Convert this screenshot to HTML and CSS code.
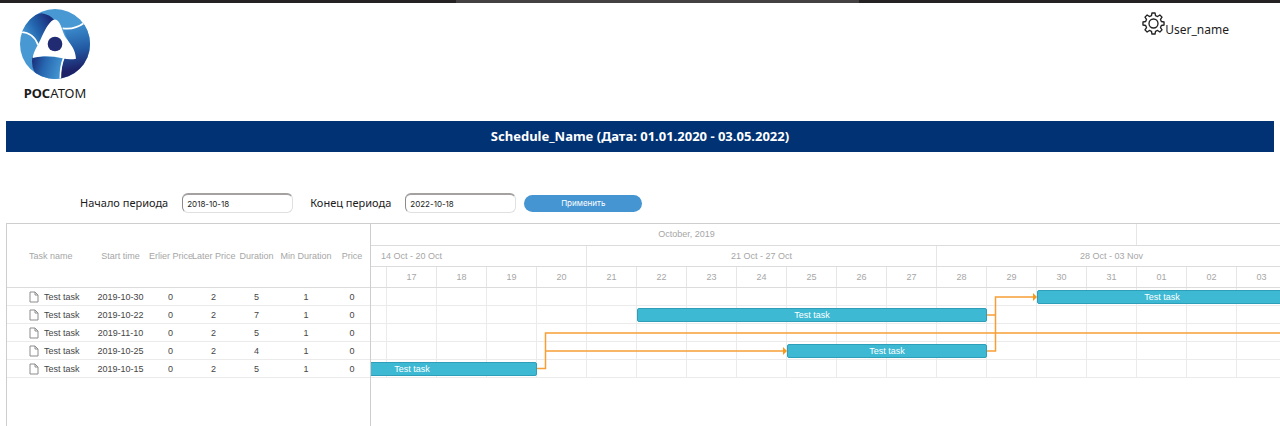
FILE: index.html
```
<!DOCTYPE html>
<html lang="ru">
<head>
<meta charset="utf-8">
<meta name="viewport" content="width=device-width, initial-scale=1">
<title>Schedule_Name</title>
<link rel="stylesheet" href="styles.css">
</head>
<body>
<div class="strip"><div class="strip-tab"></div></div>
<header class="header">
  <div class="logo">
    <svg class="logo-mark" viewBox="60 25 210 210" aria-hidden="true">
      <defs>
        <clipPath id="disc"><circle cx="165" cy="130" r="105"/></clipPath>
        <linearGradient id="g-top" x1="75" y1="100" x2="150" y2="60" gradientUnits="userSpaceOnUse"><stop offset="0" stop-color="#3f90cf"/><stop offset=".45" stop-color="#2264ad"/><stop offset="1" stop-color="#1c2f7c"/></linearGradient>
        <linearGradient id="g-right" x1="210" y1="80" x2="235" y2="205" gradientUnits="userSpaceOnUse"><stop offset="0" stop-color="#3b8ccc"/><stop offset=".55" stop-color="#2259a3"/><stop offset="1" stop-color="#1d2268"/></linearGradient>
        <linearGradient id="g-bottom" x1="98" y1="190" x2="180" y2="215" gradientUnits="userSpaceOnUse"><stop offset="0" stop-color="#1d3682"/><stop offset=".4" stop-color="#2767b0"/><stop offset="1" stop-color="#4294d1"/></linearGradient>
      </defs>
      <g clip-path="url(#disc)">
        <path fill="#4798d3" d="M60 25h210v210H60z"/>
        <path fill="url(#g-top)" d="M66 94Q90 40 125 38Q150 42 163 58L112 131Q100 98 66 94Z"/>
        <path fill="url(#g-right)" d="M190 85Q225 88 251 68L280 80V240H181Q182 200 193 172L224 172Z"/>
        <path fill="url(#g-bottom)" d="M97 170Q145 163 190 174Q180 205 181 240H130Q90 215 97 170Z"/>
        <path fill="none" stroke="#fff" stroke-width="5" d="M62 94Q102 96 114 133M188 83Q224 88 252 67M181 240Q180 198 192 170"/>
      </g>
      <path fill="#fff" d="M154 62Q165 50 176 63C187 79 187 94 198 112C210 129 226 144 228 174Q211 178 187 173C158 165 128 164 98 172C101 151 113 136 122 116C132 94 139 77 154 62Z"/>
      <circle cx="165" cy="130" r="22" fill="#202b72"/>
    </svg>
    <div class="logo-name"><b>РОС</b>АТОМ</div>
  </div>
  <div class="user">
    <svg class="gear" viewBox="-12 -12 24 24" aria-hidden="true" fill="none" stroke="#222" stroke-width="1.4" stroke-linejoin="round">
      <path d="M-2.1-8.2L-1.6-11H1.6L2.1-8.2L4.3-7.3L6.65-8.9L8.9-6.65L7.3-4.3L8.2-2.1L11-1.6V1.6L8.2 2.1L7.3 4.3L8.9 6.65L6.65 8.9L4.3 7.3L2.1 8.2L1.6 11H-1.6L-2.1 8.2L-4.3 7.3L-6.65 8.9L-8.9 6.65L-7.3 4.3L-8.2 2.1L-11 1.6V-1.6L-8.2-2.1L-7.3-4.3L-8.9-6.65L-6.65-8.9L-4.3-7.3Z"/>
      <circle r="4.7"/>
    </svg>
    <span>User_name</span>
  </div>
</header>
<main class="main">
  <h1 class="title">Schedule_Name (Дата: 01.01.2020 - 03.05.2022)</h1>
  <form class="filter">
    <label for="from">Начало периода</label>
    <input id="from" type="text" value="2018-10-18">
    <label for="to">Конец периода</label>
    <input id="to" type="text" value="2022-10-18">
    <button type="button">Применить</button>
  </form>
  <section class="gantt">
    <table class="tasks">
      <colgroup><col class="c-name"><col class="c-start"><col class="c-num"><col class="c-num"><col class="c-num"><col class="c-min"><col class="c-price"></colgroup>
      <thead><tr><th>Task name</th><th>Start time</th><th>Erlier Price</th><th>Later Price</th><th>Duration</th><th>Min Duration</th><th>Price</th></tr></thead>
      <tbody>
        <tr><td><svg class="file" viewBox="0 0 10 12"><path d="M1 1h5l3 3v7H1zM6 1v3h3"/></svg>Test task</td><td>2019-10-30</td><td>0</td><td>2</td><td>5</td><td>1</td><td>0</td></tr>
        <tr><td><svg class="file" viewBox="0 0 10 12"><path d="M1 1h5l3 3v7H1zM6 1v3h3"/></svg>Test task</td><td>2019-10-22</td><td>0</td><td>2</td><td>7</td><td>1</td><td>0</td></tr>
        <tr><td><svg class="file" viewBox="0 0 10 12"><path d="M1 1h5l3 3v7H1zM6 1v3h3"/></svg>Test task</td><td>2019-11-10</td><td>0</td><td>2</td><td>5</td><td>1</td><td>0</td></tr>
        <tr><td><svg class="file" viewBox="0 0 10 12"><path d="M1 1h5l3 3v7H1zM6 1v3h3"/></svg>Test task</td><td>2019-10-25</td><td>0</td><td>2</td><td>4</td><td>1</td><td>0</td></tr>
        <tr><td><svg class="file" viewBox="0 0 10 12"><path d="M1 1h5l3 3v7H1zM6 1v3h3"/></svg>Test task</td><td>2019-10-15</td><td>0</td><td>2</td><td>5</td><td>1</td><td>0</td></tr>
      </tbody>
    </table>
    <div class="timeline">
      <div class="track">
        <div class="scale months"><span>October, 2019</span><span></span></div>
        <div class="scale weeks"><span>14 Oct - 20 Oct</span><span>21 Oct - 27 Oct</span><span>28 Oct - 03 Nov</span></div>
        <div class="scale days"><span></span><span></span><span></span><span>17</span><span>18</span><span>19</span><span>20</span><span>21</span><span>22</span><span>23</span><span>24</span><span>25</span><span>26</span><span>27</span><span>28</span><span>29</span><span>30</span><span>31</span><span>01</span><span>02</span><span>03</span></div>
        <div class="chart">
          <div class="row"><div class="bar" style="grid-column: 17 / span 5">Test task</div></div>
          <div class="row"><div class="bar" style="grid-column: 9 / span 7">Test task</div></div>
          <div class="row"></div>
          <div class="row"><div class="bar" style="grid-column: 12 / span 4">Test task</div></div>
          <div class="row"><div class="bar" style="grid-column: 2 / span 5">Test task</div></div>
          <svg class="links" viewBox="0 0 1050 90" aria-hidden="true">
            <g fill="none" stroke="#f79f35" stroke-width="1.5">
              <path d="M300 80.500h8.500V45H1050M308.500 63H546M750 27h8.500M750 63h8.500V9H796"/>
            </g>
            <path fill="#f79a1c" d="M546 59l4 4-4 4zM796 5l4 4-4 4z"/>
          </svg>
        </div>
      </div>
    </div>
  </section>
</main>
</body>
</html>
```
FILE: styles.css
```
* { box-sizing: border-box; }

body {
  margin: 0;
  min-height: 100vh;
  display: flex;
  flex-direction: column;
  background: #fff;
  color: #1c1c1c;
  font: 12px/16px "Noto Sans", sans-serif;
}

.strip { height: 3px; background: #242223; }
.strip-tab { width: 31.5%; height: 3px; margin-left: 35.6%; background: #434142; }

.header {
  display: flex;
  justify-content: space-between;
  align-items: flex-start;
  padding: 6px 51px 20px 20px;
}
.logo { width: 70px; text-align: center; }
.logo-mark { display: block; width: 70px; height: 70px; }
.logo-name { margin-top: 6px; font-size: 13px; line-height: 16px; }
.user { display: flex; align-items: flex-end; height: 29px; }
.gear { width: 23px; height: 23px; align-self: flex-start; margin-top: 3px; }

.main { flex: 1; display: flex; flex-direction: column; padding-left: 6px; }

.title {
  margin: 0 6px 0 0;
  padding: 7px;
  background: #003274;
  color: #fff;
  font-size: 13px;
  line-height: 17px;
  font-weight: 700;
  text-align: center;
}

.filter {
  display: flex;
  align-items: center;
  padding: 41px 0 10px 74px;
  font-size: 11px;
}
.filter input {
  width: 111px;
  height: 20px;
  margin: 0 8px 0 14px;
  padding: 0 4px;
  border: 1px solid #e0e0e0;
  border-top: 2px solid #a5a1a1;
  border-left-color: #8e8a8a;
  border-radius: 6px;
  background: #fff;
  color: #222;
  font: 8px Inter, sans-serif;
}
.filter input + label { margin-left: 9px; }
.filter button {
  width: 118px;
  height: 17px;
  padding: 0;
  border: 0;
  border-radius: 9px;
  background: #4495d1;
  color: #fff;
  font: 8px Inter, sans-serif;
}

.gantt {
  flex: 1;
  display: flex;
  align-items: stretch;
  border: solid #cecece;
  border-width: 1px 0 0 1px;
  font: 9px/16px "Liberation Sans", Arial, sans-serif;
}

.tasks {
  flex: none;
  align-self: flex-start;
  width: 363px;
  table-layout: fixed;
  border-collapse: separate;
  border-spacing: 0;
  text-align: center;
}
.c-name { width: 85px; }
.c-start { width: 57px; }
.c-num { width: 43px; }
.c-min { width: 56px; }
.c-price { width: 36px; }
.tasks th {
  height: 64px;
  padding: 0;
  border-bottom: 1px solid #dcdcdc;
  color: #a6a6a6;
  font-weight: 400;
  white-space: nowrap;
}
.tasks td {
  height: 18px;
  padding: 0;
  border-bottom: 1px solid #ebebeb;
  color: #454545;
  white-space: nowrap;
}
.tasks th:first-child,
.tasks td:first-child { padding-left: 22px; text-align: left; }
.file {
  width: 10px;
  height: 12px;
  margin-right: 5px;
  vertical-align: middle;
  fill: none;
  stroke: #8c8c8c;
}

.timeline { flex: 1; min-width: 0; overflow: hidden; border-left: 1px solid #cecece; }
.track { width: 1050px; margin-left: -134px; }
.scale {
  display: grid;
  grid-template-columns: repeat(21, 50px);
  height: 21px;
  border-bottom: 1px solid #dcdcdc;
  line-height: 20px;
  color: #a6a6a6;
  text-align: center;
}
.months { height: 22px; }
.scale span { border-right: 1px solid #e6e6e6; }
.months span:first-child { grid-column: span 18; }
.months span:last-child { grid-column: span 3; }
.weeks span { grid-column: span 7; }

.chart { position: relative; }
.row {
  display: grid;
  grid-template-columns: repeat(21, 50px);
  align-items: center;
  height: 18px;
  border-bottom: 1px solid #ebebeb;
  background: repeating-linear-gradient(to right, transparent 0 49px, #ebebeb 49px 50px);
}
.bar {
  height: 14px;
  border: 1px solid #2f9fb9;
  border-radius: 2px;
  background: #3db9d3;
  color: #fff;
  line-height: 12px;
  text-align: center;
}
.links { position: absolute; top: 0; left: 0; width: 1050px; height: 90px; }
```
